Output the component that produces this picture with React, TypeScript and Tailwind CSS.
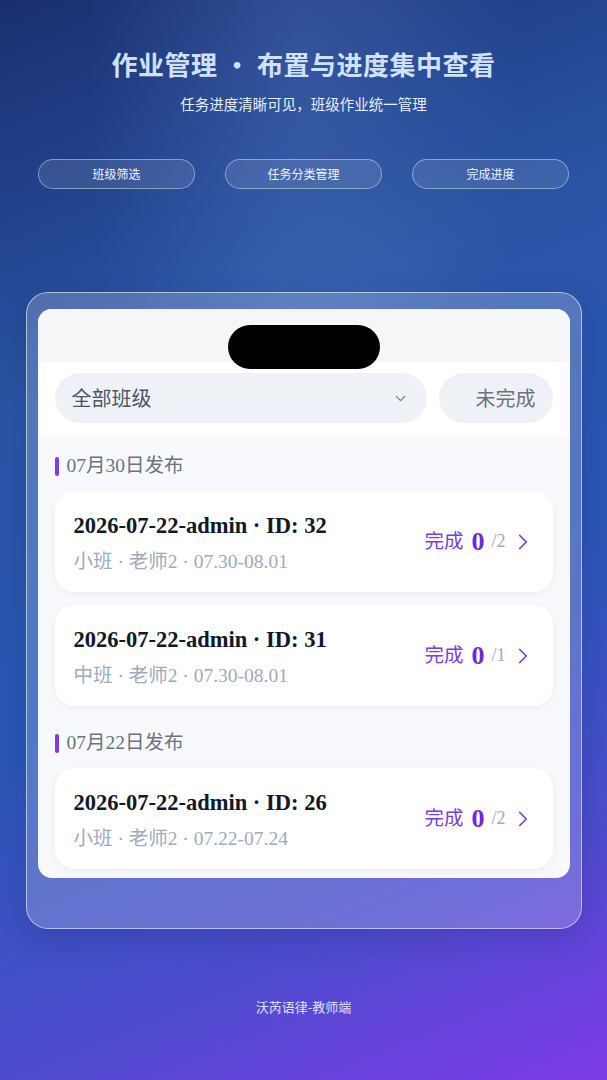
import { ChevronDown, ChevronRight } from "lucide-react";

type Task = {
  id: number;
  title: string;
  meta: string;
  done: number;
  total: number;
};

type Group = {
  date: string;
  tasks: Task[];
};

const groups: Group[] = [
  {
    date: "07月30日发布",
    tasks: [
      { id: 32, title: "2026-07-22-admin · ID: 32", meta: "小班 · 老师2 · 07.30-08.01", done: 0, total: 2 },
      { id: 31, title: "2026-07-22-admin · ID: 31", meta: "中班 · 老师2 · 07.30-08.01", done: 0, total: 1 },
    ],
  },
  {
    date: "07月22日发布",
    tasks: [
      { id: 26, title: "2026-07-22-admin · ID: 26", meta: "小班 · 老师2 · 07.22-07.24", done: 0, total: 2 },
    ],
  },
];

const features = ["班级筛选", "任务分类管理", "完成进度"];

const sans = "font-['Noto_Sans_CJK_SC','Noto_Sans',sans-serif]";
const serif = "font-['Liberation_Serif','Noto_Sans_CJK_SC',serif]";

function TaskCard({ task }: { task: Task }) {
  return (
    <div className="flex h-[101px] items-center justify-between rounded-[20px] bg-white pl-[19px] pr-[17px] shadow-[0_2px_8px_rgba(15,23,42,0.05)]">
      <div className="flex flex-col pt-[3px]">
        <p className="text-[22.5px] font-bold leading-[28px] text-[#111827]">{task.title}</p>
        <p className="mt-[10px] text-[19.5px] leading-[24px] text-[#a0aabb]">{task.meta}</p>
      </div>
      <div className="flex items-center">
        <span className="text-[19.5px] text-[#7c3aed]">完成</span>
        <span className="ml-[8px] text-[26px] font-bold leading-none text-[#6d28d9]">{task.done}</span>
        <span className="ml-[7px] text-[18px] text-[#a0aabb]">/{task.total}</span>
        <ChevronRight className="ml-[4px] h-[26px] w-[26px] text-[#7c3aed]" strokeWidth={1.6} />
      </div>
    </div>
  );
}

export default function App() {
  return (
    <div
      className={`flex min-h-[1080px] w-full flex-col items-center bg-[radial-gradient(ellipse_at_50%_6%,rgba(100,140,210,0.28),transparent_50%),linear-gradient(158deg,#1a2f70_0%,#2a55a6_32%,#2b56b6_58%,#4a4ccc_80%,#7e3ce8_100%)] ${sans}`}
    >
      <h1 className="mt-[45px] text-[26px] font-bold leading-[38px] tracking-[0.5px] text-[#cfe1ff]">
        作业管理 · 布置与进度集中查看
      </h1>
      <p className="mt-[11px] text-[14.5px] leading-[20px] text-[#e6eeff]">任务进度清晰可见，班级作业统一管理</p>

      <div className="mt-[45px] flex gap-[30px]">
        {features.map((f) => (
          <div
            key={f}
            className="flex h-[30px] w-[157px] items-center justify-center rounded-full border border-white/40 bg-white/10 text-[12px] text-[#eef3ff]"
          >
            {f}
          </div>
        ))}
      </div>

      <div className="mt-[103px] w-[556px] rounded-[22px] border-[1.5px] border-white/55 bg-white/20 px-[11px] pb-[50px] pt-[16px] shadow-[0_10px_30px_rgba(10,20,60,0.15)]">
        <div className={`overflow-hidden rounded-[14px] bg-[#f7f9fc] ${serif}`}>
          <div className="relative h-[53px] bg-[#f5f6f8]">
            <div className="absolute left-1/2 top-[16px] h-[44px] w-[152px] -translate-x-1/2 rounded-full bg-black" />
          </div>

          <div className="flex items-center gap-[12px] bg-white px-[17px] pb-[12px] pt-[11px]">
            <div className="flex h-[50px] flex-1 items-center justify-between rounded-full bg-[#eef2f7] pl-[17px] pr-[18px]">
              <span className={`text-[20px] text-[#4b5563] ${sans}`}>全部班级</span>
              <ChevronDown className="h-[17px] w-[17px] text-[#6b7280]" strokeWidth={1.6} />
            </div>
            <div className="flex h-[50px] w-[114px] items-center justify-end rounded-full bg-[#eef2f7] pr-[17px]">
              <span className={`text-[20px] text-[#6b7280] ${sans}`}>未完成</span>
            </div>
          </div>

          <div className="px-[17px] pb-[9px] pt-[19px]">
            {groups.map((g, gi) => (
              <div key={g.date} className={gi > 0 ? "mt-[25px]" : ""}>
                <div className="flex items-center">
                  <span className="h-[19px] w-[4px] rounded-full bg-[#7c3aed]" />
                  <span className="ml-[8px] text-[19.5px] leading-[24px] text-[#6b7280]">{g.date}</span>
                </div>
                <div className="mt-[13px] flex flex-col gap-[13px]">
                  {g.tasks.map((t) => (
                    <TaskCard key={t.id} task={t} />
                  ))}
                </div>
              </div>
            ))}
          </div>
        </div>
      </div>

      <p className="mt-[68px] text-[13px] text-[#dbe4ff]">沃芮语律-教师端</p>
    </div>
  );
}
